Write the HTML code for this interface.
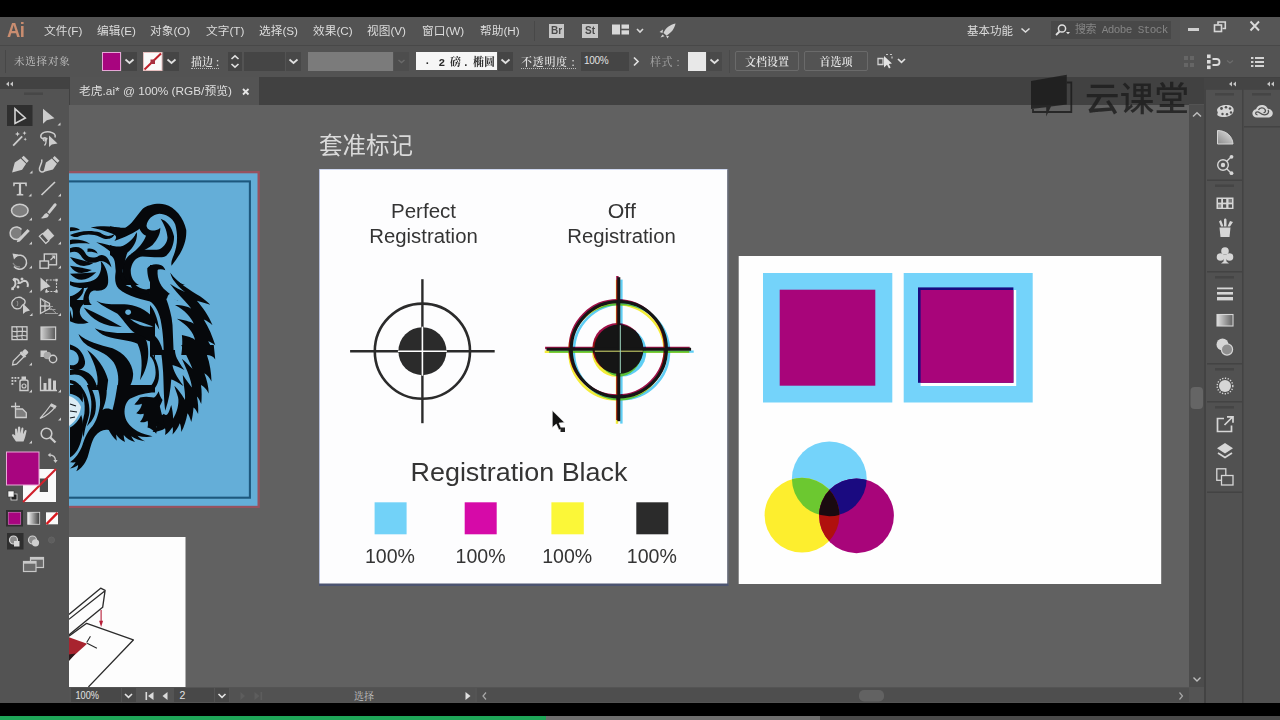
<!DOCTYPE html>
<html lang="zh">
<head>
<meta charset="utf-8">
<title>Illustrator</title>
<style>
html,body{margin:0;padding:0;background:#000;}
body{width:1280px;height:720px;overflow:hidden;position:relative;font-family:"Liberation Sans","Noto Sans CJK SC",sans-serif;color:#d6d6d6;}
.abs{position:absolute;}
#stage{position:absolute;left:0;top:0;width:1280px;height:720px;overflow:hidden;background:#000;}
#menubar{left:0;top:17px;width:1280px;height:28px;background:#535353;}
#ctrlbar{left:0;top:45px;width:1280px;height:32px;background:#535353;border-top:1px solid #484848;box-sizing:border-box;}
#tabbar{left:0;top:77px;width:1280px;height:28px;background:#414141;}
#tab{left:70px;top:77px;width:189px;height:28px;background:#545454;}
#canvas{left:69px;top:105px;width:1120px;height:582px;background:#616161;overflow:hidden;}
#toolbar{left:0;top:89px;width:69px;height:614px;background:#535353;}
#toolhead{left:0;top:78px;width:69px;height:11px;background:#424242;}
#status{left:69px;top:687px;width:1135px;height:16px;background:#535353;}
#vscroll{left:1189px;top:104px;width:15px;height:583px;background:#535353;}
#dock{left:1204px;top:78px;width:76px;height:625px;background:#424242;}
#bottomblack{left:0;top:703px;width:1280px;height:13px;background:#000;}
#prog{left:0;top:716px;width:1280px;height:4px;background:#4a4a4a;}
.mi{position:absolute;top:22.5px;font-size:11.7px;line-height:16px;color:#dcdcdc;white-space:nowrap;}
.ct{position:absolute;font-size:11px;line-height:14px;color:#d0d0d0;white-space:nowrap;}
</style>
</head>
<body>
<div id="stage">
<div id="menubar" class="abs"></div>
<div id="ctrlbar" class="abs"></div>
<div id="tabbar" class="abs"></div>
<div id="tab" class="abs"></div>
<div id="canvas" class="abs">
<svg class="abs" style="left:0;top:0" width="1120" height="582" viewBox="69 105 1120 582" font-family="'Liberation Sans','Noto Sans CJK SC',sans-serif">
<defs>
<g id="regmark">
<circle cx="0" cy="0" r="47.6" fill="none" stroke-width="2.6"/>
<line x1="-72.3" y1="0" x2="72.3" y2="0" stroke-width="2.4"/>
<line x1="0" y1="-72" x2="0" y2="72" stroke-width="2.4"/>
</g>
<g id="regmark2">
<circle cx="0" cy="0" r="47.6" fill="none" stroke-width="3.2"/>
<line x1="-72.3" y1="0" x2="72.3" y2="0" stroke-width="3"/>
<line x1="0" y1="-72" x2="0" y2="72" stroke-width="3"/>
</g>
<clipPath id="clipC"><circle cx="829.3" cy="478.8" r="37.4"/></clipPath>
<clipPath id="clipY"><circle cx="802" cy="515.2" r="37.4"/></clipPath>
</defs>
<!-- tiger artboard -->
<rect x="60" y="171" width="199.800" height="337" fill="#96525f"/><rect x="60" y="173.300" width="197.500" height="332.500" fill="#64aed8"/>
<rect x="60" y="181.400" width="189.900" height="316.300" fill="none" stroke="#1d587e" stroke-width="2.100"/>
<g id="tiger">
<clipPath id="tclip"><rect x="69" y="182" width="180" height="316"/></clipPath><g clip-path="url(#tclip)">
<g transform="translate(110 195) scale(0.125)" fill="#06080b">
<path d="M0 250 C50 262 100 262 130 262 C170 240 200 180 260 112 C300 78 380 62 440 75 C520 95 590 180 610 280 C615 380 570 470 492 565 C488 545 492 525 500 505 C535 430 550 340 522 235 C500 180 440 150 395 150 C340 155 300 195 292 245 C295 275 330 290 365 282 C385 278 395 270 402 262 C405 300 385 350 340 400 C290 440 230 460 168 472 C220 435 270 380 288 325 C270 318 245 300 228 250 C215 275 190 290 150 300 C100 310 50 300 0 292Z"/>
<path d="M405 190 C450 205 495 250 512 330 C515 400 480 470 440 492 C400 505 330 495 260 492 C215 495 180 525 167 590 C160 650 190 700 232 720 L150 720 C115 690 95 640 100 585 C108 515 165 455 240 442 C300 432 360 445 400 432 C435 410 458 380 460 340 C455 280 430 230 405 190Z"/>
<path d="M298 585 C320 555 370 545 410 562 C430 572 440 590 442 602 C420 590 390 590 372 602 C350 625 355 680 375 720 L335 720 C310 690 298 640 298 585Z"/>
<path d="M482 620 C500 660 540 700 600 720 L560 720 C520 705 495 670 482 620Z"/>
<path d="M0 400 C50 420 110 415 150 392 C180 365 200 330 212 295 C215 340 195 390 150 425 C110 450 50 450 0 432Z"/>
<path d="M0 440 C40 460 80 455 105 450 C95 500 85 560 100 610 C110 660 140 700 165 720 L100 720 C70 690 50 650 45 600 C40 560 45 500 0 480Z"/>
</g>
<g transform="translate(65 215) scale(0.125)" fill="#06080b">
<path d="M205 100 C280 85 400 88 470 112 C520 80 560 40 600 0 L680 0 C660 40 640 80 600 105 C560 140 480 175 395 208 C420 180 410 160 380 150 C330 130 270 110 205 100Z"/>
<path d="M40 160 C100 130 200 115 280 140 C310 160 340 185 400 150 C380 200 320 200 280 175 C220 150 160 150 100 175 C80 180 60 175 40 160Z"/>
<path d="M250 218 C320 230 380 250 430 262 C490 240 540 200 575 140 C580 200 550 260 500 300 C480 340 480 400 460 440 C440 480 440 520 470 550 C520 590 620 600 720 640 L720 700 C620 680 500 650 430 590 C390 550 400 480 410 430 C415 380 400 330 370 300 C340 270 290 240 250 218Z"/>
<path d="M40 265 C90 245 140 255 160 300 C175 340 230 355 270 325 C310 310 350 330 372 420 C340 380 300 360 270 372 C220 395 160 380 130 330 C110 295 80 285 40 300Z"/>
<path d="M40 335 Q118 449 225 385 Q142 361 40 335Z"/>
<path d="M40 405 Q101 503 215 440 Q119 417 40 405Z"/>
<path d="M40 470 Q133 572 250 458 Q127 468 40 470Z"/>
<path d="M285 365 C330 410 350 480 345 540 C340 590 300 610 250 605 C215 600 195 620 190 660 C190 690 200 710 215 720 L150 720 C140 680 150 620 185 580 C140 590 90 585 40 560 L40 530 C100 550 180 545 230 520 C280 495 300 430 285 365Z"/>
<path d="M40 650 C90 640 130 600 150 565 C160 620 120 680 40 700Z"/>
<path d="M520 480 C530 540 580 590 650 595 C690 590 710 575 720 560 L720 600 C680 640 600 640 550 600 C520 570 510 520 520 480Z"/>
<path d="M40 100 C70 95 100 105 120 120 C90 125 60 125 40 130Z"/>
<path d="M40 200 C90 190 150 200 200 230 C150 225 90 225 40 235Z"/>
<path d="M180 270 C220 262 250 280 262 310 C235 295 205 292 180 295Z"/>
</g>
<g transform="translate(65 300) scale(0.125)" fill="#06080b">
<path d="M40 0 L200 0 C150 20 110 60 120 110 C130 150 170 170 190 180 C140 200 80 190 40 170Z"/>
<path d="M250 5 C320 45 420 30 500 35 C600 45 680 100 720 160 L720 340 C650 330 590 290 540 250 C500 215 460 150 420 110 C370 80 300 50 250 5Z"/>
<path d="M150 60 Q247 215 455 215 Q293 125 150 60Z"/>
<path d="M238 225 C330 262 450 270 560 262 L640 300 C680 380 680 520 600 642 C620 540 620 430 580 350 C520 320 420 320 330 290 C290 275 260 250 238 225Z"/>
<path d="M108 272 C170 335 280 360 380 385 C470 420 540 500 545 590 C545 640 525 690 500 720 L415 720 C435 650 430 570 390 500 C350 440 280 410 220 385 C160 360 125 320 108 272Z"/>
<path d="M178 400 C250 450 320 540 345 640 L335 720 L250 720 C280 640 250 520 178 400Z"/>
<path d="M40 355 C100 370 150 420 160 490 C165 540 130 560 90 560 C60 560 40 550 40 550 L40 520 C80 530 110 510 110 470 C110 430 80 400 40 395Z"/>
<path d="M40 560 C100 545 170 560 215 610 C240 640 255 680 260 720 L200 720 C190 670 160 620 110 600 C85 592 60 595 40 600Z"/>
<path d="M690 395 C705 430 715 460 720 480 L720 400Z"/>
<path d="M40 640 C80 640 120 670 140 720 L100 720 C90 690 70 670 40 665Z"/>
</g>
<g transform="translate(150 265) scale(0.125)" fill="#06080b">
<path d="M0 0 L70 0 C50 60 60 130 110 190 C150 230 190 250 230 290 C200 270 160 260 130 270 C150 330 175 400 180 480 C185 560 185 640 190 720 L110 720 C110 640 105 540 85 440 C70 370 40 320 0 290Z"/>
<path d="M163 63 C220 140 320 200 400 250 C440 280 465 300 482 318 C450 305 410 295 375 285 C420 340 470 400 500 482 C480 460 455 445 430 435 C470 500 500 570 522 642 C500 625 480 615 465 610 C490 650 505 690 510 720 L250 720 C260 660 260 600 255 560 C300 570 340 580 360 600 C350 540 300 480 215 430 C270 440 320 450 350 470 C330 420 280 360 200 320 C250 320 300 330 330 350 C300 300 240 260 160 150 C200 180 240 200 280 215 C230 180 190 130 163 63Z"/>
<path d="M0 320 C30 350 60 420 75 520 C50 470 25 440 0 420Z"/>
<path d="M0 540 C40 560 80 600 100 680 L110 720 L0 720Z"/>
</g>
<g transform="translate(150 350) scale(0.125)" fill="#06080b">
<path d="M85 0 L200 0 C200 40 215 80 275 160 C240 140 200 125 180 120 C185 160 210 210 268 288 C230 262 190 240 170 235 C165 320 150 400 122 485 C110 400 110 280 105 180 C100 110 95 50 85 0Z"/>
<path d="M250 -40 L510 -40 L522 75 C505 50 480 40 455 40 C480 110 490 180 492 252 C475 215 455 195 435 185 C455 240 468 290 470 348 C450 310 430 290 408 280 C415 330 415 380 410 432 C395 395 385 380 375 372 C385 420 388 465 385 512 C370 480 358 465 348 460 C345 500 340 540 330 575 C320 540 312 520 300 505 C290 560 275 610 250 655 C250 620 245 600 238 585 C225 620 205 650 180 675 C185 650 185 630 180 615 C165 640 145 665 120 680 C125 655 125 640 120 625 C100 640 60 655 20 655 C40 640 50 625 55 610 C35 615 15 615 0 610 L0 560 C40 560 80 540 110 510 C140 540 150 500 170 440 C180 480 185 520 185 550 C215 500 235 430 225 380 C215 340 200 310 195 285 C230 320 265 370 280 400 C285 350 270 290 262 200 C290 240 320 280 335 300 C330 240 300 170 255 70 C290 100 320 130 340 150 C320 100 290 40 250 -40Z"/>
<path d="M0 20 C50 60 80 150 70 230 C60 290 30 320 0 335 L0 290 C30 270 45 220 45 180 C45 120 25 70 0 50Z"/>
<path d="M0 400 C30 390 50 370 70 330 C75 360 85 380 100 400 C90 430 70 470 40 500 C30 480 15 470 0 465Z"/>
</g>
<g transform="translate(65 385) scale(0.125)" fill="#06080b">
<path d="M250 0 L330 0 C340 60 330 130 300 200 C330 180 360 190 380 200 C400 130 410 60 420 0 L720 0 L720 60 C650 60 580 80 520 110 C480 140 470 200 480 250 C490 300 530 340 580 370 C620 390 660 400 700 410 C660 420 620 415 580 405 C600 425 620 440 640 450 C600 445 560 430 530 410 C540 430 550 445 560 455 C520 445 490 425 470 400 C470 420 475 440 480 455 C450 440 425 420 410 395 C410 415 412 430 415 445 C385 420 365 390 350 360 C310 350 270 370 240 410 C210 450 200 520 180 580 C160 630 130 670 90 690 C100 670 105 655 105 640 C85 655 65 665 40 668 C60 650 75 635 85 615 C70 620 55 620 40 618 C80 590 120 540 140 480 C160 420 180 370 220 330 C250 290 270 230 280 160 C285 100 270 40 250 0Z"/>
<path d="M600 100 C650 90 690 95 740 110 C760 160 770 230 800 330 C770 310 745 300 730 300 C735 330 735 360 730 390 C710 365 685 345 660 340 C665 320 665 300 660 285 C640 300 620 300 600 295 C620 270 630 250 630 230 C610 235 590 235 570 225 C600 200 615 170 615 150 C595 160 575 160 555 155 C575 135 590 115 600 100Z"/>
<path d="M120 0 C170 60 200 140 195 220 C190 280 160 320 150 420 C130 350 140 290 155 230 C165 150 150 70 100 0Z"/>
<path d="M195 0 C240 70 260 150 240 230 C225 280 195 310 175 330 C200 270 215 200 210 130 C205 80 190 40 175 0Z"/>
<path d="M40 0 L110 0 C140 40 150 90 140 140 C120 100 90 80 40 70Z"/>
<path d="M40 340 C80 320 110 280 130 240 C150 300 150 380 130 440 C115 500 90 550 40 580Z"/>
</g>
<g transform="translate(65 300) scale(0.125)" fill="#64aed8">
<path d="M520 150 Q602 223 705 212 Q618 177 520 150Z"/>
<path d="M505 75 a24 22 0 1 0 0.100 0Z"/>
<path d="M40 50 C60 60 70 100 60 150 C50 120 45 90 40 80Z"/>
</g>
<g transform="translate(150 265) scale(0.125)" fill="#64aed8">
<path d="M150 235 C190 225 220 250 235 290 C200 275 170 275 135 285 C135 265 140 245 150 235Z"/>
</g>
<path d="M69 396 C75 398 79 402 81 407 C80 414 76 421 69 426Z" fill="#dcecf4"/>
<path d="M70 404 L76 406 M70 411 L77 412 M70 418 L75 417" stroke="#10161c" stroke-width="1.200" fill="none"/>
</g></g>
<!-- artboard 2 (bottom-left) -->
<rect x="60" y="537" width="125.5" height="151" fill="#fdfdfd"/>
<g transform="translate(60 530) scale(0.2222)" fill="none" stroke="#2c2c2c" stroke-width="6" stroke-linejoin="round">
<path d="M40 380 L183 262 L203 272 L192 348 L40 472 M40 402 L200 276"/>
<path d="M40 478 L120 420 L330 495 L128 706"/>
<path d="M137 478 L120 506 M122 510 L166 532" stroke-width="5"/>
<path d="M40 482 L122 512 L40 585Z" fill="#a8242f" stroke="none"/>
<path d="M40 560 L70 556 L40 590Z" fill="#2a1a1c" stroke="none"/>
<path d="M185 360 V415" stroke="#b8203a" stroke-width="5"/><path d="M176 408 L185 436 L194 408Z" fill="#b8203a" stroke="none"/>
</g>

<!-- title -->
<text x="319" y="154" font-size="23.5" fill="#dadada">套准标记</text>
<!-- middle artboard -->
<rect x="319.5" y="169.5" width="408" height="415" fill="#fdfdfe"/>
<rect x="319" y="169" width="409" height="1" fill="#cfd8f0"/><rect x="319" y="169" width="1" height="416" fill="#b8c0dc"/><rect x="727.300" y="169" width="1.200" height="416" fill="#6a7080"/>
<rect x="319" y="583.500" width="409.500" height="2.500" fill="#4c5470"/>
<g fill="#343434" font-size="20" text-anchor="middle" lengthAdjust="spacingAndGlyphs">
<text x="423.5" y="218" textLength="65" lengthAdjust="spacingAndGlyphs">Perfect</text>
<text x="423.5" y="243.300" textLength="108.500" lengthAdjust="spacingAndGlyphs">Registration</text>
<text x="621.800" y="217.800" textLength="28" lengthAdjust="spacingAndGlyphs">Off</text>
<text x="621.500" y="243.200" textLength="108.500" lengthAdjust="spacingAndGlyphs">Registration</text>
<text x="519" y="481" font-size="26" textLength="217" lengthAdjust="spacingAndGlyphs">Registration Black</text>
<text x="390" y="563.300" textLength="50" lengthAdjust="spacingAndGlyphs">100%</text>
<text x="480.600" y="563.300" textLength="50" lengthAdjust="spacingAndGlyphs">100%</text>
<text x="567.200" y="563.300" textLength="50" lengthAdjust="spacingAndGlyphs">100%</text>
<text x="651.800" y="563.300" textLength="50" lengthAdjust="spacingAndGlyphs">100%</text>
</g>
<!-- perfect registration mark -->
<g transform="translate(422.4 351.2)">
<circle r="24" fill="#2b2b2b"/>
<use href="#regmark" stroke="#2b2b2b"/>
<line x1="-24.5" y1="0" x2="24.5" y2="0" stroke="#fff" stroke-width="1.6"/>
<line x1="0" y1="-24.5" x2="0" y2="24.5" stroke="#fff" stroke-width="1.6"/>
</g>
<!-- off registration mark -->
<g transform="translate(618.8 349.200)">
<g style="mix-blend-mode:multiply" transform="translate(2.6 2.4)"><circle r="25" fill="#5fd0f5"/><use href="#regmark" stroke="#5fd0f5"/></g>
<g style="mix-blend-mode:multiply" transform="translate(-1.8 2.6)"><circle r="25" fill="#f5ee3a"/><use href="#regmark" stroke="#f5ee3a"/></g>
<g style="mix-blend-mode:multiply" transform="translate(-1.4 -1.2)"><circle r="25" fill="#a01048"/><use href="#regmark" stroke="#a01048"/></g>
<circle r="24.6" fill="#151515"/><use href="#regmark2" stroke="#151515"/>
<line x1="-24" y1="2" x2="24" y2="2" stroke="#d8e070" stroke-width="1"/>
<line x1="1.5" y1="-24" x2="1.5" y2="24" stroke="#9fd8c0" stroke-width="1"/>
</g>
<!-- swatches -->
<rect x="374.6" y="502.3" width="32" height="32" fill="#72d2f8"/>
<rect x="464.7" y="502.3" width="32" height="32" fill="#d60aa8"/>
<rect x="551.4" y="502.3" width="32.4" height="32" fill="#fbf738"/>
<rect x="636.3" y="502.3" width="32" height="32" fill="#2b2b2b"/>
<!-- cursor -->
<path d="M552.3 410.5 L552.3 427.5 L556.3 424 L559 430 L561.5 428.8 L559 423 L564.5 422.6 Z" fill="#111" stroke="#f4f4f4" stroke-width="0.6"/>
<rect x="560.5" y="427.5" width="4.5" height="4.5" fill="#222"/>
<!-- right artboard -->
<rect x="738.7" y="256" width="422.5" height="328" fill="#fefefe"/>
<rect x="763" y="273" width="129.3" height="129.5" fill="#74d3fa"/>
<rect x="779.7" y="289.7" width="95.6" height="96" fill="#a8057a"/>
<rect x="903.7" y="273" width="129" height="129.5" fill="#74d3fa"/>
<rect x="920.6" y="290" width="95.6" height="96" fill="#fefefe"/>
<rect x="918" y="287.4" width="95.4" height="95.4" fill="#1a0a80"/>
<rect x="920.6" y="290" width="92.8" height="92.8" fill="#a8057a"/>
<!-- circles -->
<circle cx="829.3" cy="478.8" r="37.4" fill="#74d3fa"/>
<circle cx="802" cy="515.2" r="37.4" fill="#fdee2e"/>
<circle cx="856.5" cy="515.8" r="37.4" fill="#a8057a"/>
<circle cx="802" cy="515.2" r="37.4" fill="#6cc830" clip-path="url(#clipC)"/>
<circle cx="856.5" cy="515.8" r="37.4" fill="#1a0a80" clip-path="url(#clipC)"/>
<circle cx="856.5" cy="515.8" r="37.4" fill="#b0100e" clip-path="url(#clipY)"/>
<g clip-path="url(#clipY)"><circle cx="856.5" cy="515.8" r="37.4" fill="#1a0a10" clip-path="url(#clipC)"/></g>
</svg>

</div>
<div id="toolhead" class="abs"></div>
<div id="toolbar" class="abs"></div>
<div id="status" class="abs"></div>
<div id="vscroll" class="abs"></div>
<div id="dock" class="abs"></div>
<div id="bottomblack" class="abs"></div>
<div id="prog" class="abs"><div class="abs" style="left:0;top:0;width:546px;height:4px;background:#1fa658"></div><div class="abs" style="left:546px;top:0;width:274px;height:4px;background:#6e6e6e"></div></div>
<div class="abs" style="left:7px;top:17px;font-size:20px;line-height:26px;font-weight:bold;color:#c98d70;letter-spacing:-0.5px;transform:scaleX(0.92);transform-origin:0 0">Ai</div>
<span class="mi" style="left:44px">文件(F)</span>
<span class="mi" style="left:97px">编辑(E)</span>
<span class="mi" style="left:150px">对象(O)</span>
<span class="mi" style="left:206px">文字(T)</span>
<span class="mi" style="left:259px">选择(S)</span>
<span class="mi" style="left:313px">效果(C)</span>
<span class="mi" style="left:367px">视图(V)</span>
<span class="mi" style="left:422px">窗口(W)</span>
<span class="mi" style="left:480px">帮助(H)</span>
<div class="abs" style="left:534px;top:21px;width:1px;height:20px;background:#484848"></div>
<div class="abs" style="left:549px;top:24px;width:15px;height:14px;background:#c6c6c6;color:#4a4a4a;font-size:10px;line-height:14px;text-align:center;font-weight:bold">Br</div>
<div class="abs" style="left:582px;top:24px;width:16px;height:14px;background:#c6c6c6;color:#4a4a4a;font-size:10px;line-height:14px;text-align:center;font-weight:bold">St</div>
<svg class="abs" style="left:611px;top:23px" width="68" height="16" viewBox="0 0 68 16">
<rect x="1" y="1.5" width="8" height="10" fill="#d8d8d8"/><rect x="10.5" y="1.5" width="7.5" height="4.2" fill="#d8d8d8"/><rect x="10.5" y="7.3" width="7.5" height="4.2" fill="#d8d8d8"/>
<path d="M26 6 L29 9 L32 6" fill="none" stroke="#d8d8d8" stroke-width="1.6"/>
<path d="M64.5 0.5 C59 1.5 54.5 5 52.5 10 L55.5 12.5 C60 10 63.5 6 64.5 0.5 Z M52 6.5 L48.5 9 L51.5 10 Z M58 13 L56.5 15.5 L55 12.8 Z M51.5 11.5 L49.5 14.5 L53.5 13.2 Z" fill="#d2d2d2"/>
</svg>
<span class="mi" style="left:967px;font-size:11.5px">基本功能</span>
<svg class="abs" style="left:1019px;top:24px" width="14" height="12" viewBox="0 0 14 12"><path d="M2.5 4.5 L6.5 8 L10.5 4.5" fill="none" stroke="#dcdcdc" stroke-width="1.6"/></svg>
<div class="abs" style="left:1051px;top:21px;width:120px;height:18px;background:#484848"></div>
<svg class="abs" style="left:1054px;top:22px" width="18" height="16" viewBox="0 0 18 16"><circle cx="8" cy="6.5" r="3.6" fill="none" stroke="#e0e0e0" stroke-width="1.5"/><path d="M5.5 9.5 L2 13" stroke="#e0e0e0" stroke-width="1.8"/><path d="M12 10 L16 10 L14 12.3 Z" fill="#e0e0e0"/></svg>
<span class="abs" style="left:1075px;top:22px;font-size:11px;line-height:16px;color:#858585;font-family:'Liberation Mono','Noto Sans CJK SC',monospace;letter-spacing:-0.6px;white-space:nowrap">搜索 Adobe Stock</span>
<div class="abs" style="left:1180px;top:17px;width:100px;height:28px;background:#565656"></div>
<div class="abs" style="left:1188px;top:28px;width:11px;height:3px;background:#d0d0d0"></div>
<svg class="abs" style="left:1212px;top:20px" width="16" height="14" viewBox="0 0 16 14"><rect x="2.5" y="5" width="7" height="6.5" fill="none" stroke="#d6d6d6" stroke-width="1.6"/><path d="M6 4.5 V2 H13.3 V8.5 H10.5" fill="none" stroke="#d6d6d6" stroke-width="1.6"/></svg>
<svg class="abs" style="left:1247px;top:19px" width="16" height="14" viewBox="0 0 16 14"><path d="M3.5 2.5 L12 11.5 M12 2.5 L3.5 11.5" stroke="#dadada" stroke-width="1.9"/></svg>

<div class="abs" style="left:5px;top:50px;width:1px;height:23px;background:#474747"></div>
<span class="ct" style="left:14px;top:54px;font-size:10.5px;color:#c4c4c4;font-family:'Noto Serif CJK SC','Noto Sans CJK SC',serif;letter-spacing:0.8px">未选择对象</span>
<div class="abs" style="left:102px;top:52px;width:19px;height:19px;background:#a8057f;border:1px solid #e6a6d6;box-sizing:border-box"></div>
<div class="abs" style="left:122px;top:52px;width:15px;height:19px;background:#454545"></div>
<svg class="abs" style="left:122px;top:52px" width="15" height="19" viewBox="0 0 15 19"><path d="M3.5 7.5 L7.5 11 L11.5 7.5" fill="none" stroke="#e0e0e0" stroke-width="1.7"/></svg>
<svg class="abs" style="left:143px;top:52px" width="20" height="19" viewBox="0 0 20 19"><rect x="0.5" y="0.5" width="18.5" height="18" fill="#fafafa" stroke="#e8c0c0" stroke-width="1"/><path d="M1.5 17.5 L18 1.5" stroke="#c0202a" stroke-width="2"/><rect x="7.5" y="7.5" width="4.5" height="4.5" fill="#a83040"/></svg>
<div class="abs" style="left:164px;top:52px;width:15px;height:19px;background:#454545"></div>
<svg class="abs" style="left:164px;top:52px" width="15" height="19" viewBox="0 0 15 19"><path d="M3.5 7.5 L7.5 11 L11.5 7.5" fill="none" stroke="#e0e0e0" stroke-width="1.7"/></svg>
<span class="ct" style="left:191px;top:54px;font-size:11px;color:#dedede;border-bottom:1px dotted #bdbdbd;line-height:14px;font-family:'Noto Serif CJK SC',serif;font-weight:600">描边 :</span>
<div class="abs" style="left:228px;top:52px;width:14px;height:19px;background:#454545"></div>
<svg class="abs" style="left:228px;top:52px" width="14" height="19" viewBox="0 0 14 19"><path d="M3.5 7 L7 3.8 L10.5 7 M3.5 12 L7 15.2 L10.5 12" fill="none" stroke="#e0e0e0" stroke-width="1.6"/></svg>
<div class="abs" style="left:244px;top:52px;width:41px;height:19px;background:#454545"></div>
<div class="abs" style="left:286px;top:52px;width:15px;height:19px;background:#484848"></div>
<svg class="abs" style="left:286px;top:52px" width="15" height="19" viewBox="0 0 15 19"><path d="M3.5 7.5 L7.5 11 L11.5 7.5" fill="none" stroke="#e0e0e0" stroke-width="1.7"/></svg>
<div class="abs" style="left:308px;top:52px;width:85px;height:19px;background:#7b7b7b"></div>
<div class="abs" style="left:394px;top:52px;width:15px;height:19px;background:#4d4d4d"></div>
<svg class="abs" style="left:394px;top:52px" width="15" height="19" viewBox="0 0 15 19"><path d="M4.5 8 L7.5 10.5 L10.5 8" fill="none" stroke="#6a6a6a" stroke-width="1.4"/></svg>
<div class="abs" style="left:416px;top:52px;width:81px;height:18px;background:#f6f6f6"></div>
<svg class="abs" style="left:416px;top:52px" width="81" height="18" viewBox="416 52 81 18"><text y="65.500" font-size="11" font-weight="bold" fill="#2a2a2a" font-family="'Liberation Mono','Noto Serif CJK SC',monospace" x="424 438.500 450 462.500 473 484">·2磅.椭圆</text></svg>
<div class="abs" style="left:498px;top:52px;width:15px;height:19px;background:#454545"></div>
<svg class="abs" style="left:498px;top:52px" width="15" height="19" viewBox="0 0 15 19"><path d="M3.5 7.5 L7.5 11 L11.5 7.5" fill="none" stroke="#e0e0e0" stroke-width="1.7"/></svg>
<span class="ct" style="left:521px;top:54px;font-size:11px;color:#dedede;border-bottom:1px dotted #bdbdbd;line-height:14px;font-family:'Noto Serif CJK SC',serif;font-weight:600;letter-spacing:0.7px">不透明度 :</span>
<div class="abs" style="left:581px;top:52px;width:48px;height:19px;background:#454545"></div>
<span class="ct" style="left:584px;top:54px;font-size:10px;color:#e0e0e0;letter-spacing:-0.3px">100%</span>
<svg class="abs" style="left:629px;top:52px" width="14" height="19" viewBox="0 0 14 19"><path d="M5 5.5 L9 9.5 L5 13.5" fill="none" stroke="#e0e0e0" stroke-width="1.7"/></svg>
<span class="ct" style="left:650px;top:54px;font-size:11px;color:#a8a8a8;font-family:'Noto Serif CJK SC',serif;letter-spacing:0.5px">样式 :</span>
<div class="abs" style="left:688px;top:52px;width:18px;height:19px;background:#e8e8e8"></div>
<div class="abs" style="left:707px;top:52px;width:15px;height:19px;background:#4a4a4a"></div>
<svg class="abs" style="left:707px;top:52px" width="15" height="19" viewBox="0 0 15 19"><path d="M3.5 7.5 L7.5 11 L11.5 7.5" fill="none" stroke="#e0e0e0" stroke-width="1.7"/></svg>
<div class="abs" style="left:729px;top:50px;width:1px;height:23px;background:#4a4a4a"></div>
<div class="abs" style="left:735px;top:51px;width:64px;height:20px;border:1px solid #6a6a6a;box-sizing:border-box;border-radius:2px;font-size:11px;line-height:18px;text-align:center;color:#e4e4e4;font-family:'Noto Serif CJK SC',serif;font-weight:600">文档设置</div>
<div class="abs" style="left:804px;top:51px;width:64px;height:20px;border:1px solid #6a6a6a;box-sizing:border-box;border-radius:2px;font-size:11px;line-height:18px;text-align:center;color:#e4e4e4;font-family:'Noto Serif CJK SC',serif;font-weight:600">首选项</div>
<svg class="abs" style="left:876px;top:52px" width="34" height="20" viewBox="0 0 34 20"><path d="M2 6.5 H7 V12.5 H2 Z" fill="none" stroke="#d0d0d0" stroke-width="1.3"/><path d="M8 4 L8 15.5 L11 12.8 L13 16.5 L14.6 15.6 L12.8 12 L16 11.6 Z" fill="#e4e4e4"/><path d="M10 2.5 h2 M14 2.5 h2 M16 4.5 v2" stroke="#c8c8c8" stroke-width="1.2" fill="none"/><path d="M22 7 L25.5 10.3 L29 7" fill="none" stroke="#e0e0e0" stroke-width="1.7"/></svg>
<svg class="abs" style="left:1180px;top:52px" width="90" height="20" viewBox="0 0 90 20"><g fill="#666"><rect x="4" y="4" width="4" height="4"/><rect x="10" y="4" width="4" height="4"/><rect x="4" y="11" width="4" height="4"/><rect x="10" y="11" width="4" height="4"/></g>
<g fill="#dcdcdc"><rect x="27" y="2.5" width="3.6" height="3.6"/><rect x="27" y="8" width="3.6" height="3.6"/><rect x="27" y="13.5" width="3.6" height="3.6"/></g><path d="M32.5 7 H36.5 A3 3 0 0 1 36.500 13 H32.500" fill="none" stroke="#dcdcdc" stroke-width="1.8"/>
<path d="M47 8.500 L50 11 L53 8.500" fill="none" stroke="#6c6c6c" stroke-width="1.3"/>
<g fill="#d4d4d4"><rect x="71" y="5" width="2.4" height="2"/><rect x="75" y="5" width="9" height="2"/><rect x="71" y="9" width="2.400" height="2"/><rect x="75" y="9" width="9" height="2"/><rect x="71" y="13" width="2.400" height="2"/><rect x="75" y="13" width="9" height="2"/></g></svg>
<!-- tab -->
<span class="ct" style="left:79px;top:84px;font-size:11.800px;line-height:15px;color:#dedede">老虎.ai* @ 100% (RGB/预览)</span>
<svg class="abs" style="left:240px;top:86px" width="12" height="12" viewBox="0 0 12 12"><path d="M3 3 L8.500 8.500 M8.500 3 L3 8.500" stroke="#e6e6e6" stroke-width="1.8"/></svg>

<svg class="abs" style="left:0;top:78px" width="69" height="610" viewBox="0 78 69 610">
<!-- header -->
<path d="M9 81.500 L6 84 L9 86.500 Z M13 81.500 L10 84 L13 86.500 Z" fill="#c4c4c4"/>
<rect x="24" y="92.500" width="19" height="2.500" fill="#474747"/>
<rect x="7" y="105" width="25.500" height="21" fill="#2f2f2f"/>
<g fill="#cdcdcd" stroke="none">
<!-- selection (outline) -->
<path d="M15 108.800 L15 123.400 L25.300 118 Z" fill="none" stroke="#d4d4d4" stroke-width="1.600" stroke-linejoin="miter"/>
<!-- direct selection -->
<path d="M43 108.800 L43 123.800 L46.800 120.300 L54.500 118.300 Z"/>
<path d="M60.500 122.500 V125.500 H57.500 Z"/>
<!-- magic wand -->
<path d="M12.500 145 L13.800 146.300 L22.800 137 L21.500 135.700 Z"/>
<path d="M17.500 131.500 l0.700 1.800 1.800 0.700 -1.800 0.700 -0.700 1.800 -0.700 -1.800 -1.800 -0.700 1.800 -0.700z M24.500 131 l0.600 1.500 1.500 0.600 -1.500 0.600 -0.600 1.500 -0.600 -1.500 -1.500 -0.600 1.500 -0.600z M25.200 137.600 l0.500 1.200 1.200 0.500 -1.200 0.500 -0.500 1.200 -0.500 -1.200 -1.200 -0.500 1.200 -0.500z"/>
<!-- lasso -->
<path d="M47.500 138.500 C44 139.500 40.500 138.500 40.800 135.800 C41.200 132.500 46 131.200 50 132 C54 132.800 56 135 55 137.500" fill="none" stroke="#cdcdcd" stroke-width="1.500"/>
<path d="M45 139 C46.500 140 46.500 143 44.500 145.500" fill="none" stroke="#cdcdcd" stroke-width="1.300"/>
<circle cx="44.800" cy="139.300" r="1.700" fill="none" stroke="#cdcdcd" stroke-width="1.100"/>
<path d="M49 135.500 L49 147 L51.800 144.500 L57.500 143.500 Z"/>
<!-- pen -->
<g transform="translate(19.500 165) rotate(45)"><path d="M-3.600 -9.500 H3.600 V-6.500 H-3.600 Z M-3.800 -5.500 H3.800 L5.200 1.500 L0 10.500 L-5.200 1.500 Z"/></g>
<path d="M32.500 170.500 V173.500 H29.500 Z"/>
<!-- curvature pen -->
<g transform="translate(50.500 165) rotate(45)"><path d="M-3.400 -9.300 H3.400 V-6.500 H-3.400 Z M-3.600 -5.500 H3.600 L5 1.500 L0 10 L-5 1.500 Z"/></g>
<path d="M41.500 159.500 C43.500 162 38.500 166.500 39.500 170 C40.300 172.500 43 172.500 44.500 171" fill="none" stroke="#cdcdcd" stroke-width="1.400"/>
<!-- T -->
<path d="M13.200 182.500 H26.800 V186.200 H25.600 L25 184 H21.100 V193.800 L23.300 194.300 V195.500 H16.700 V194.300 L18.900 193.800 V184 H15 L14.400 186.200 H13.200 Z"/>
<path d="M31.500 193.500 V196.500 H28.500 Z"/>
<!-- line -->
<path d="M41.500 195 L55 182" stroke="#cdcdcd" stroke-width="1.700" fill="none"/>
<path d="M61 193.500 V196.500 H58 Z"/>
<!-- ellipse -->
<ellipse cx="19.800" cy="210.500" rx="8.300" ry="6.300" fill="#7e7e7e" stroke="#cdcdcd" stroke-width="1.500"/>
<path d="M32 217.500 V220.500 H29 Z"/>
<!-- brush -->
<path d="M55.800 203.500 C56.800 204.200 56.800 205 56.200 205.800 L49.500 214 L47.300 212.300 L53.800 204 C54.500 203.200 55.200 203.100 55.800 203.500 Z"/>
<path d="M46.500 213 L48.800 214.800 C48.800 217.500 45.500 218.800 40.500 218.300 C43.500 217 43.500 214 46.500 213 Z"/>
<path d="M61 217.500 V220.500 H58 Z"/>
<!-- shaper -->
<path d="M21 237.500 A6.300 6.300 0 1 1 21.500 229.500" fill="#7e7e7e" stroke="#cdcdcd" stroke-width="1.500"/>
<path d="M17.500 239.500 L27.500 229 L29.800 231 L19.800 241.500 L16.800 242.300 Z"/>
<path d="M32 241.500 V244.500 H29 Z"/>
<!-- eraser -->
<g transform="translate(48.500 234.500) rotate(-42)"><rect x="-8" y="-4.800" width="11.500" height="9.600"/><rect x="-8" y="-4.800" width="4.200" height="9.600" fill="#535353" stroke="#cdcdcd" stroke-width="1.200"/></g>
<path d="M61 241.500 V244.500 H58 Z"/>
<!-- rotate -->
<path d="M15.500 256.500 A7 7 0 1 1 14 266.500" fill="none" stroke="#cdcdcd" stroke-width="1.600"/>
<path d="M12.500 253.500 L18.500 254.500 L14 259.500 Z"/>
<path d="M20 266.800 A7 7 0 0 1 13 263" fill="none" stroke="#8a8a8a" stroke-width="1.300"/>
<path d="M32 265.500 V268.500 H29 Z"/>
<!-- scale -->
<rect x="44.300" y="254" width="12.200" height="10.800" fill="none" stroke="#cdcdcd" stroke-width="1.400"/>
<rect x="40" y="261" width="8.500" height="7.200" fill="#535353" stroke="#cdcdcd" stroke-width="1.400"/>
<path d="M50.500 260 L54.500 256 M51.800 256 H54.500 V258.700" fill="none" stroke="#cdcdcd" stroke-width="1.200"/>
<path d="M61 265.500 V268.500 H58 Z"/>
<!-- width / puppet -->
<path d="M12.500 288.500 C16 286.500 16.500 282 14 279.800 C17 278 19.500 280.500 18.500 283 C21 283.500 22 281 24.500 280.800 C27.500 280.800 28.500 284 27.500 287" fill="none" stroke="#cdcdcd" stroke-width="2"/>
<circle cx="14.500" cy="279.500" r="1.700"/><circle cx="22" cy="279" r="1.500"/><rect x="11.300" y="287.500" width="2.600" height="2.600"/><circle cx="18" cy="287" r="1.400"/>
<path d="M32 289.500 V292.500 H29 Z"/>
<!-- free transform -->
<path d="M40.500 277.500 L40.500 291.500 L44 288.500 L50.500 286.500 Z"/>
<rect x="46.500" y="280" width="10" height="11.500" fill="none" stroke="#cdcdcd" stroke-width="1.100" stroke-dasharray="2 1.200"/>
<rect x="55.300" y="278.800" width="2.400" height="2.400"/><rect x="55.300" y="290.300" width="2.400" height="2.400"/><rect x="45.300" y="290.300" width="2.400" height="2.400"/>
<!-- shape builder -->
<path d="M14 299.500 C11.500 301 11 304.500 13 306.500 C14 309 18 309.500 20.500 308 L22.500 305 C26 304 26 299.500 22.500 298.500 C20.500 296.500 15.500 297 14 299.500 Z" fill="none" stroke="#cdcdcd" stroke-width="1.300"/>
<path d="M17 301 C18 302.500 18 304.500 17 306" fill="none" stroke="#9a9a9a" stroke-width="1"/>
<path d="M23 303.500 L23 314 L25.800 311.800 L30 310.500 Z"/>
<path d="M32.500 313 V316 H29.500 Z"/>
<!-- perspective grid -->
<path d="M40.500 298.500 L40.500 313.500 L49.500 308.500 L49.500 303.500 Z M45 301 V311 M40.500 306 H49.500" fill="none" stroke="#cdcdcd" stroke-width="1.300"/>
<path d="M40.500 298.500 L57 314 M49.500 306.500 H53 M49.500 309.500 H55.500 M45 313.500 H58" fill="none" stroke="#a0a0a0" stroke-width="1"/>
<path d="M61 313 V316 H58 Z"/>
<!-- mesh -->
<rect x="12" y="326.800" width="15" height="12.800" fill="none" stroke="#cdcdcd" stroke-width="1.300"/>
<path d="M12 331 C17 333 22 329.500 27 332 M12 336 C17 337.500 22 334 27 336 M16.500 326.800 C18.500 331 15.500 335 17.500 339.600 M22 326.800 C24 331 20.500 335 22.500 339.600" fill="none" stroke="#cdcdcd" stroke-width="1.100"/>
<!-- gradient -->
<defs><linearGradient id="tg" x1="0" x2="1" y1="0" y2="0"><stop offset="0" stop-color="#d0d0d0"/><stop offset="1" stop-color="#585858"/></linearGradient>
<linearGradient id="tg2" x1="0" x2="1" y1="0" y2="0"><stop offset="0" stop-color="#f4f4f4"/><stop offset="1" stop-color="#3a3a3a"/></linearGradient></defs>
<rect x="41" y="327" width="14.600" height="12.600" fill="url(#tg)" stroke="#cdcdcd" stroke-width="1.200"/>
<!-- eyedropper -->
<g transform="translate(19.500 358) rotate(45)"><rect x="-2.600" y="-10.500" width="5.200" height="4.800" rx="1.200"/><rect x="-3.600" y="-6" width="7.200" height="2"/><path d="M-2.300 -4 H2.300 V6.500 L0 9.800 L-2.300 6.500 Z" fill="none" stroke="#cdcdcd" stroke-width="1.300"/></g>
<path d="M32 362.500 V365.500 H29 Z"/>
<!-- blend -->
<rect x="40.500" y="350.500" width="6.500" height="6.500"/><circle cx="47.500" cy="355.500" r="3.800" fill="#a8a8a8"/><circle cx="53" cy="359" r="3.700" fill="#535353" stroke="#cdcdcd" stroke-width="1.400"/>
<!-- symbol sprayer -->
<g><rect x="11.500" y="377" width="1.800" height="1.800"/><rect x="14.500" y="377" width="1.800" height="1.800"/><rect x="17.500" y="377" width="1.800" height="1.800"/><rect x="11.500" y="380" width="1.800" height="1.800"/><rect x="14.500" y="380" width="1.800" height="1.800"/><rect x="11.500" y="383" width="1.800" height="1.800"/></g>
<rect x="21.500" y="376.500" width="4.500" height="3.200"/><path d="M20 381.500 C20 380.500 21 380 22 380 H25.500 C27 380 28 380.500 28 381.500 V390.500 H20 Z" fill="none" stroke="#cdcdcd" stroke-width="1.400"/><circle cx="24" cy="386" r="2" fill="none" stroke="#cdcdcd" stroke-width="1.100"/>
<path d="M32 389.500 V392.500 H29 Z"/>
<!-- graph -->
<path d="M40.500 376.500 V390.500 H57" fill="none" stroke="#cdcdcd" stroke-width="1.300"/>
<rect x="43.500" y="383" width="3" height="7"/><rect x="48.200" y="378.500" width="3" height="11.500"/><rect x="53" y="380.500" width="3" height="9.500"/>
<path d="M61 389.500 V392.500 H58 Z"/>
<!-- artboard -->
<path d="M15.500 402.500 V409 M11 406.500 H20" fill="none" stroke="#cdcdcd" stroke-width="1.300"/>
<path d="M15.500 409 H22.500 L26.300 412.800 V417.500 H15.500 Z" fill="#7e7e7e" stroke="#cdcdcd" stroke-width="1.300"/>
<!-- slice -->
<path d="M40 418.500 C44 414 48 409 51.500 404 L55.800 406.300 C52 411 46.500 416 40 418.500 Z" fill="none" stroke="#cdcdcd" stroke-width="1.200"/>
<path d="M51 404 L55.800 406.300 L55.300 408.800 L49.800 406 Z"/>
<path d="M61 417.500 V420.500 H58 Z"/>
<!-- hand -->
<path d="M16 441.500 C14.500 439 12.500 436.500 11.800 435 C12.500 433.800 14 434.300 15.200 435.800 L15 429.500 C15.200 428 16.800 428 17 429.500 L17.500 433.500 L18 427.500 C18.200 426 20 426 20.200 427.500 L20.400 433.500 L21.500 428.300 C21.800 427 23.500 427.300 23.400 428.800 L23 434.300 L24.800 430.500 C25.400 429.500 26.800 430 26.500 431.300 C25.800 434.500 25 438.500 23.500 441.500 Z"/>
<path d="M32 440.500 V443.500 H29 Z"/>
<!-- zoom -->
<circle cx="46.500" cy="433.500" r="5.300" fill="none" stroke="#cdcdcd" stroke-width="1.600"/><path d="M50.300 437.500 L55.500 442.500" stroke="#cdcdcd" stroke-width="2.300"/>
</g>
<!-- fill / stroke -->
<rect x="23" y="469" width="33" height="33" fill="#fafafa"/><rect x="39.500" y="478.500" width="8.500" height="13.500" fill="#4a4a4a"/><rect x="31" y="478.500" width="8.500" height="13.500" fill="#fafafa"/>
<path d="M23 502 L56 469" stroke="#d0202a" stroke-width="2.200"/>
<rect x="6.500" y="452" width="32.500" height="33" fill="#a8057f" stroke="#eaa8d8" stroke-width="1"/>
<path d="M49.500 455 C53.500 455 55.500 457 55.500 461" fill="none" stroke="#c8c8c8" stroke-width="1.300"/><path d="M50.500 452.800 L47.800 455 L50.500 457.200 Z M53.300 460 L55.500 463 L57.700 460 Z" fill="#c8c8c8"/>
<rect x="11" y="494" width="6" height="6" fill="#222" stroke="#ddd" stroke-width="0.800"/><rect x="8" y="491" width="6" height="6" fill="#f4f4f4" stroke="#333" stroke-width="0.600"/>
<!-- color mode row -->
<rect x="6" y="510" width="17" height="16.500" fill="#2f2f2f"/>
<rect x="8.300" y="512.300" width="12.400" height="12" fill="#a8057f" stroke="#d070b8" stroke-width="0.700"/>
<rect x="27.700" y="512.300" width="12" height="12" fill="url(#tg2)" stroke="#ddd" stroke-width="0.800"/>
<rect x="46" y="512.300" width="12" height="12" fill="#fafafa"/><path d="M46.500 524 L57.500 512.800" stroke="#d8181e" stroke-width="2.400"/>
<!-- draw modes -->
<rect x="7" y="533" width="16.500" height="16.500" fill="#2f2f2f"/>
<circle cx="13.500" cy="540" r="4" fill="#8a8a8a" stroke="#d8d8d8" stroke-width="1.200"/><rect x="14" y="541" width="5.500" height="5.500" fill="#d8d8d8"/>
<circle cx="32.500" cy="540" r="4" fill="#8a8a8a" stroke="#d0d0d0" stroke-width="1.200"/><circle cx="35.500" cy="542.800" r="3.600" fill="#d0d0d0"/>
<circle cx="51.500" cy="540" r="3" fill="#5e5e5e" stroke="#646464" stroke-width="1"/>
<!-- screen mode -->
<rect x="30.500" y="557.500" width="13" height="10" fill="#6a6a6a" stroke="#c8c8c8" stroke-width="1.200"/><rect x="30.500" y="557.500" width="13" height="2.200" fill="#c8c8c8"/>
<rect x="23.500" y="561.500" width="12.500" height="10" fill="#6a6a6a" stroke="#c8c8c8" stroke-width="1.200"/><rect x="23.500" y="561.500" width="12.500" height="2.200" fill="#c8c8c8"/>
</svg>

<svg class="abs" style="left:1189px;top:78px" width="91" height="625" viewBox="1189 78 91 625">
<!-- vertical scrollbar -->
<rect x="1189" y="105" width="15" height="582" fill="#4c4c4c"/>
<rect x="1189" y="687" width="15" height="16" fill="#4e4e4e"/>
<path d="M1193 152.500 L1197 148.800 L1201 152.500" transform="translate(0 -36)" fill="none" stroke="#bdbdbd" stroke-width="1.500"/>
<path d="M1193.500 677.500 L1197 681 L1200.500 677.500" fill="none" stroke="#bdbdbd" stroke-width="1.400"/>
<rect x="1190.500" y="387" width="12.500" height="22" rx="4" fill="#656565"/>
<!-- dock bg -->
<rect x="1204" y="78" width="76" height="625" fill="#434343"/>
<rect x="1206" y="89.500" width="36" height="614" fill="#515151"/>
<rect x="1243.500" y="89.500" width="36.500" height="614" fill="#515151"/>
<rect x="1204" y="78" width="76" height="11.500" fill="#444"/>
<g fill="#c4c4c4"><path d="M1232 81.500 L1229 84 L1232 86.500 Z M1236 81.500 L1233 84 L1236 86.500 Z M1270 81.500 L1267 84 L1270 86.500 Z M1274 81.500 L1271 84 L1274 86.500 Z"/></g>
<!-- separators -->
<g fill="#434343"><rect x="1207" y="179.500" width="35" height="1.500"/><rect x="1207" y="271" width="35" height="1.500"/><rect x="1207" y="363" width="35" height="1.500"/><rect x="1207" y="401" width="35" height="1.500"/><rect x="1207" y="491.500" width="35" height="1.500"/><rect x="1244" y="126" width="36" height="1.500"/></g>
<g fill="#454545"><rect x="1215" y="93" width="19" height="2.500"/><rect x="1215" y="184.500" width="19" height="2.500"/><rect x="1215" y="276" width="19" height="2.500"/><rect x="1215" y="368" width="19" height="2.500"/><rect x="1215" y="406" width="19" height="2.500"/><rect x="1252" y="93" width="19" height="2.500"/></g>
<g fill="#d6d6d6" stroke="none">
<!-- palette -->
<path d="M1217 110 C1218 106 1223 104.500 1228 105 C1232 105.500 1234.500 108 1233.500 111.500 C1232.500 115.500 1227 117.500 1222 117 C1218.500 116.500 1216.500 115 1217.500 113.500 C1218.500 112.500 1217 111.500 1217 110 Z"/>
<g fill="#515151"><circle cx="1221.500" cy="108.500" r="1.400"/><circle cx="1226" cy="107.300" r="1.300"/><circle cx="1230" cy="108.500" r="1.300"/><circle cx="1222.500" cy="114" r="1.200"/><circle cx="1227" cy="114.300" r="1.200"/><circle cx="1231" cy="112.500" r="1.200"/></g>
<!-- color guide -->
<defs><linearGradient id="dg1" x1="0" y1="1" x2="1" y2="0"><stop offset="0" stop-color="#8a8a8a"/><stop offset="1" stop-color="#e4e4e4"/></linearGradient>
<linearGradient id="dg2" x1="0" y1="0" x2="1" y2="0"><stop offset="0" stop-color="#e0e0e0"/><stop offset="1" stop-color="#606060"/></linearGradient></defs>
<path d="M1217.500 130.500 C1226 130.500 1232.500 136 1233 144 H1217.500 Z" fill="url(#dg1)" stroke="#d6d6d6" stroke-width="1"/>
<!-- graphic styles-ish -->
<circle cx="1223" cy="165" r="5.300" fill="none" stroke="#d6d6d6" stroke-width="1.400"/><circle cx="1223" cy="165" r="2.200"/>
<path d="M1226.500 161.500 L1231 157 M1226.500 168.500 L1231 173" stroke="#d6d6d6" stroke-width="1.400"/><circle cx="1231.500" cy="156.800" r="1.900"/><circle cx="1231.500" cy="173.200" r="1.900"/>
<!-- swatches -->
<rect x="1216.500" y="197.500" width="17" height="11.500"/><g fill="#515151"><rect x="1218" y="199" width="3.200" height="3.600"/><rect x="1223" y="199" width="3.200" height="3.600"/><rect x="1228.500" y="199" width="3.500" height="3.600" fill="#7a7a7a"/><rect x="1218" y="204.300" width="3.200" height="3.400" fill="#8a8a8a"/><rect x="1223" y="204.300" width="3.200" height="3.400"/><rect x="1228.500" y="204.300" width="3.500" height="3.400"/></g>
<!-- brushes -->
<path d="M1219.500 227.500 H1230.500 L1229.500 237 H1220.500 Z"/>
<path d="M1221 226.500 L1219 221.500 L1221 220 L1223.500 226.500 Z M1224 226.500 L1224 220 C1224 218 1226.500 218 1226.500 220 L1226.500 226.500 Z M1227.500 226.500 L1230 221 L1233 222 L1230 226.500 Z"/>
<!-- symbols club -->
<circle cx="1225" cy="251" r="3.800"/><circle cx="1220.500" cy="257" r="3.800"/><circle cx="1229.500" cy="257" r="3.800"/><path d="M1224 255 H1226 L1226.500 261.500 L1229 263.500 H1221 L1223.500 261.500 Z"/>
<!-- stroke -->
<rect x="1217" y="287.500" width="16" height="1.800"/><rect x="1217" y="292" width="16" height="2.600"/><rect x="1217" y="297" width="16" height="3.400"/>
<!-- gradient -->
<rect x="1217" y="314.500" width="16" height="11.500" fill="url(#dg2)" stroke="#d6d6d6" stroke-width="1.100"/>
<!-- transparency -->
<circle cx="1222.500" cy="344.500" r="6"/><circle cx="1227" cy="349.500" r="5.600" fill="#8e8e8e" stroke="#d6d6d6" stroke-width="1.200"/>
<!-- appearance -->
<circle cx="1225" cy="386" r="6"/><circle cx="1225" cy="386" r="7.800" fill="none" stroke="#d6d6d6" stroke-width="1.400" stroke-dasharray="1.300 1.500"/>
<!-- export -->
<path d="M1224 418.500 H1217.500 V431.500 H1231.500 V425.500" fill="none" stroke="#d6d6d6" stroke-width="1.700"/>
<path d="M1224.500 425 L1232.500 417 M1227 416.800 H1233 V422.800" fill="none" stroke="#d6d6d6" stroke-width="1.700"/>
<!-- layers -->
<path d="M1225 443 L1233 448.300 L1225 453.500 L1217 448.300 Z"/><path d="M1218 453 L1225 457.500 L1232 453" fill="none" stroke="#d6d6d6" stroke-width="1.700"/>
<!-- artboards -->
<rect x="1216.800" y="468.800" width="9" height="11.500" fill="none" stroke="#d6d6d6" stroke-width="1.300"/><rect x="1221.500" y="475.500" width="11.500" height="9.500" fill="#515151" stroke="#d6d6d6" stroke-width="1.300"/>
<!-- CC -->
<path d="M1257 117.500 C1253.500 117.500 1252 115 1252.500 112.500 C1253 110.500 1254.500 109.500 1256 109.300 C1257 106 1260 104.500 1263 105 C1265.500 105.400 1267 107 1267.800 108.800 C1270.500 108.800 1272.800 110.800 1272.800 113.300 C1272.800 116 1270.500 117.500 1268 117.500 Z"/>
<path d="M1257.500 114.800 C1255 114.800 1255 111.800 1257.500 111.800 C1259.500 111.800 1261 114.800 1264.500 114.800 C1268 114.800 1269.500 112 1268 110 M1258.500 110 C1259.500 107.500 1263.500 107 1265 109.500 C1266.500 111.500 1264.500 113 1263.500 112.500" fill="none" stroke="#515151" stroke-width="1.300"/>
</g>
</svg>

<svg class="abs" style="left:69px;top:687px" width="1135" height="16" viewBox="69 687 1135 16" font-family="'Liberation Sans','Noto Sans CJK SC',sans-serif">
<rect x="69" y="687" width="1135" height="16" fill="#545454"/>
<rect x="71" y="688" width="50" height="14" fill="#484848"/>
<text x="75.500" y="699" font-size="10.500" fill="#e2e2e2" textLength="23.500" lengthAdjust="spacingAndGlyphs">100%</text>
<rect x="122" y="688" width="14" height="14" fill="#484848"/>
<path d="M125 694 L128.500 697.300 L132 694" fill="none" stroke="#e2e2e2" stroke-width="1.600"/>
<g fill="#dcdcdc"><rect x="145.500" y="692" width="1.600" height="8"/><path d="M153.500 692 V700 L148 696 Z"/><path d="M167.500 692 V700 L162.500 696 Z"/></g>
<rect x="174" y="688" width="40" height="14" fill="#484848"/>
<text x="179.500" y="699" font-size="10.500" fill="#e2e2e2">2</text>
<rect x="215" y="688" width="14" height="14" fill="#484848"/>
<path d="M218.500 694 L222 697.300 L225.500 694" fill="none" stroke="#e2e2e2" stroke-width="1.600"/>
<g fill="#6a6a6a"><path d="M240.500 692 V700 L245 696 Z"/><path d="M254.500 692 V700 L259.500 696 Z"/><rect x="260.500" y="692" width="1.600" height="8"/></g>
<rect x="230" y="688" width="245" height="14" fill="#505050" opacity="0.500"/>
<text x="354" y="699.500" font-size="10" fill="#c4c4c4" font-family="'Noto Serif CJK SC',serif">选择</text>
<path d="M465.500 692 V700 L470.500 696 Z" fill="#e0e0e0"/>
<rect x="477" y="688" width="712" height="14" fill="#4e4e4e"/>
<path d="M486 692.500 L483 696 L486 699.500" fill="none" stroke="#a8a8a8" stroke-width="1.200"/>
<path d="M1179.500 692.500 L1182.500 696 L1179.500 699.500" fill="none" stroke="#a8a8a8" stroke-width="1.200"/>
<rect x="859" y="690" width="25" height="11.500" rx="5" fill="#626262"/>
</svg>

<!--WM-->
<svg class="abs" style="left:1025px;top:70px" width="175" height="52" viewBox="1025 70 175 52" opacity="0.82">
<path d="M1031 81 L1066.800 74.800 L1066.800 104.500 L1051 106.500 L1046.200 116.500 L1046.200 107.300 L1031 109 Z" fill="#1c1c1c"/>
<path d="M1066.800 82.500 H1071.300 V112 H1033 V109" fill="none" stroke="#1c1c1c" stroke-width="1.800"/>
<text x="1085" y="110.500" font-size="34.500" font-weight="500" fill="#1e1e1e" font-family="'Liberation Sans','Noto Sans CJK SC',sans-serif" textLength="104" lengthAdjust="spacing">云课堂</text>
</svg>

</div>
</body>
</html>
